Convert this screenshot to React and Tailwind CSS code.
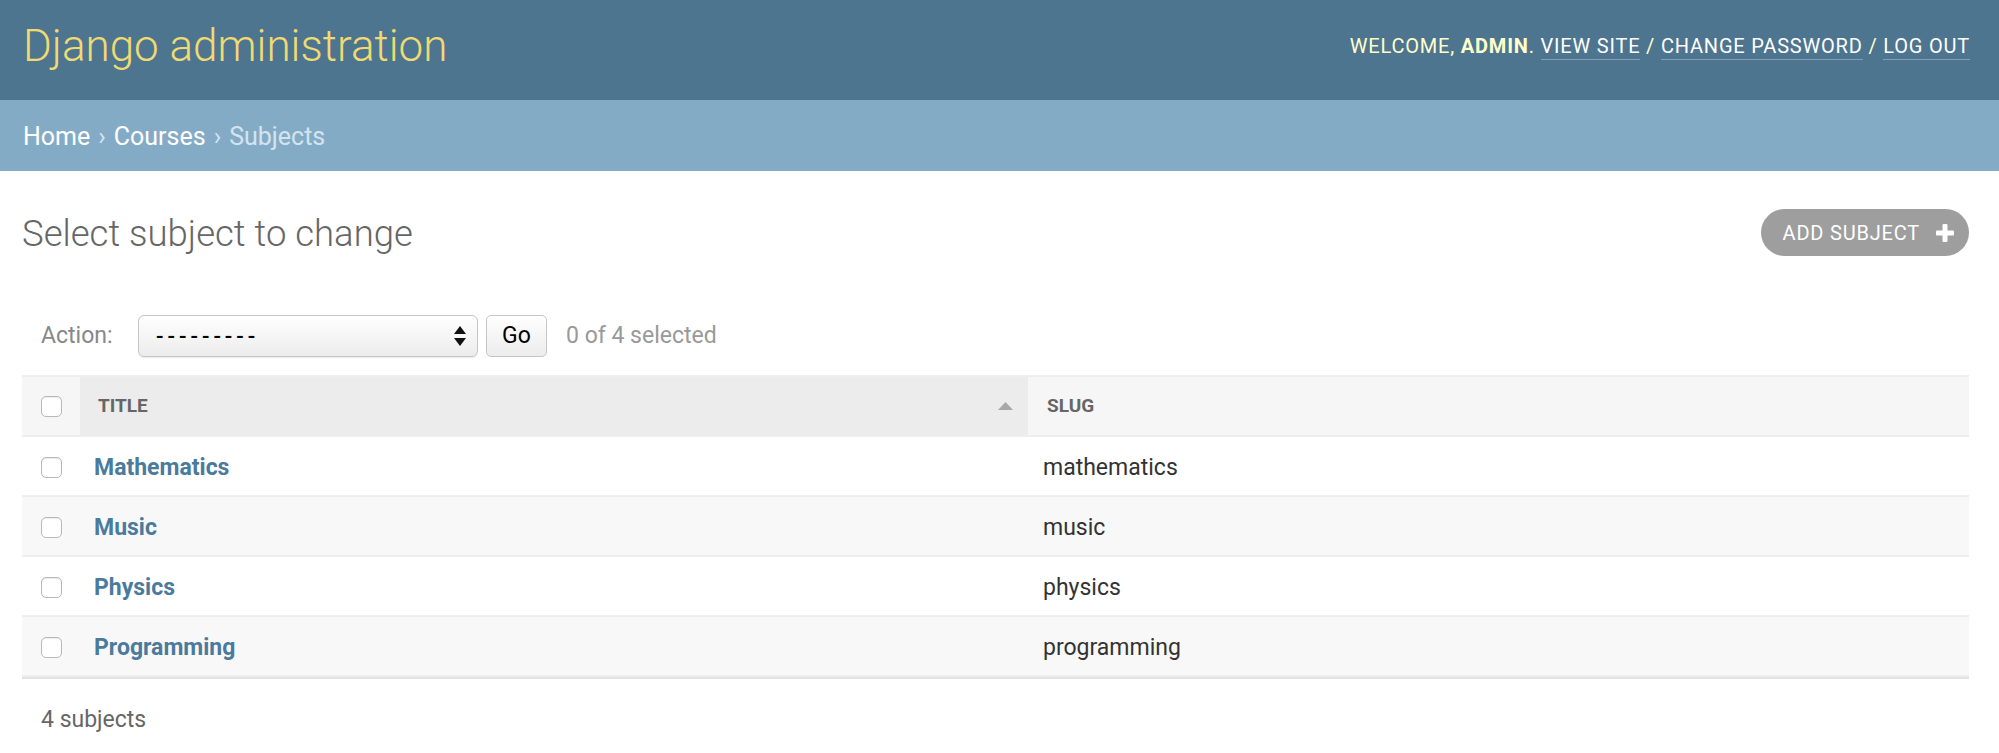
import { useState } from 'react';

const subjects = [
  { id: 1, title: 'Mathematics', slug: 'mathematics' },
  { id: 2, title: 'Music', slug: 'music' },
  { id: 3, title: 'Physics', slug: 'physics' },
  { id: 4, title: 'Programming', slug: 'programming' },
];

function Checkbox({ checked, onChange }) {
  return (
    <button
      type="button"
      onClick={onChange}
      className={`w-[21px] h-[21px] rounded-[5px] border border-[#b8b8b8] shadow-[inset_0_1px_1px_rgba(0,0,0,0.08)] ${
        checked ? 'bg-[#4a7b9d]' : 'bg-white'
      }`}
    ></button>
  );
}

function PlusIcon() {
  return (
    <svg width="18" height="18" viewBox="0 0 18 18">
      <rect x="6.5" y="0" width="5" height="18" rx="1" fill="#fff" />
      <rect x="0" y="6.5" width="18" height="5" rx="1" fill="#fff" />
    </svg>
  );
}

export default function App() {
  const [selected, setSelected] = useState([]);

  const toggle = (id) => {
    setSelected(selected.includes(id) ? selected.filter((s) => s !== id) : [...selected, id]);
  };

  const toggleAll = () => {
    setSelected(selected.length === subjects.length ? [] : subjects.map((s) => s.id));
  };

  return (
    <div className="min-h-[753px] bg-white font-['Roboto','Liberation_Sans',sans-serif] text-[#333]">
      {/* header */}
      <div className="h-[100px] bg-[#4e758f] flex items-center justify-between pl-[23px] pr-[29px] pb-[8px]">
        <h1 className="text-[44px] font-light text-[#f0da72] leading-none">Django administration</h1>
        <div className="text-[20px] tracking-[0.8px] uppercase text-[#ffffcc]">
          Welcome, <strong className="font-bold">admin</strong>.{' '}
          <a className="text-white border-b border-white/30 pb-[1px]">View site</a> /{' '}
          <a className="text-white border-b border-white/30 pb-[1px]">Change password</a> /{' '}
          <a className="text-white border-b border-white/30 pb-[1px]">Log out</a>
        </div>
      </div>

      {/* breadcrumbs */}
      <div className="h-[71px] bg-[#84abc6] flex items-center pl-[23px] pt-[3px] text-[25px] text-[#d4e4ee]">
        <a className="text-white">Home</a>
        <span className="mx-[8px]">›</span>
        <a className="text-white">Courses</a>
        <span className="mx-[8px]">›</span>
        <span>Subjects</span>
      </div>

      <div className="pl-[22px] pr-[30px]">
        {/* title row */}
        <div className="flex items-center justify-between mt-[38px]">
          <h2 className="text-[36.5px] font-light text-[#666] leading-none pt-[4px]">Select subject to change</h2>
          <a className="h-[47px] flex items-center gap-[16px] pl-[22px] pr-[15px] rounded-full bg-[#9e9e9e] text-white text-[20px] tracking-[0.8px] uppercase">
            Add subject
            <PlusIcon />
          </a>
        </div>

        {/* actions */}
        <div className="flex items-center mt-[59px] pl-[19px] text-[23px]">
          <label className="text-[#888] w-[97px]">Action:</label>
          <div className="w-[340px] h-[42px] flex items-center justify-between pl-[17px] pr-[11px] rounded-[6px] border border-[#c6c6c6] bg-gradient-to-b from-white to-[#ececec] shadow-[0_1px_1px_rgba(0,0,0,0.08)]">
            <span className="text-black text-[22px] font-medium tracking-[4px]">---------</span>
            <svg width="12" height="20" viewBox="0 0 12 20">
              <path d="M6 0 L12 8 L0 8 Z" fill="#111" />
              <path d="M0 12 L12 12 L6 20 Z" fill="#111" />
            </svg>
          </div>
          <button className="ml-[8px] w-[61px] h-[42px] rounded-[5px] border border-[#c6c6c6] bg-gradient-to-b from-white to-[#ececec] text-black text-[23px]">
            Go
          </button>
          <span className="ml-[19px] text-[#999]">
            {selected.length} of {subjects.length} selected
          </span>
        </div>

        {/* results table */}
        <table className="w-full mt-[18px] border-collapse">
          <thead>
            <tr className="h-[60px] text-[19px] font-bold uppercase text-[#666] text-left">
              <th className="w-[58px] bg-[#f6f6f6] border-y-2 border-[#eee]">
                <div className="flex justify-center">
                  <Checkbox checked={selected.length === subjects.length} onChange={toggleAll} />
                </div>
              </th>
              <th className="w-[948px] bg-[#ececec] border-y-2 border-[#eee] pl-[18px] pr-[15px]">
                <div className="flex items-center justify-between">
                  <span>Title</span>
                  <svg width="15" height="8" viewBox="0 0 15 8">
                    <path d="M7.5 0 L15 8 L0 8 Z" fill="#a8a8a8" />
                  </svg>
                </div>
              </th>
              <th className="bg-[#f6f6f6] border-y-2 border-[#eee] pl-[19px]">Slug</th>
            </tr>
          </thead>
          <tbody>
            {subjects.map((s, i) => (
              <tr
                key={s.id}
                className={`h-[60px] text-[23px] border-b-2 border-[#eee] ${i % 2 === 1 ? 'bg-[#f8f8f8]' : 'bg-white'}`}
              >
                <td className="pt-[2px]">
                  <div className="flex justify-center">
                    <Checkbox checked={selected.includes(s.id)} onChange={() => toggle(s.id)} />
                  </div>
                </td>
                <td className="pl-[14px] pt-[4px]">
                  <a className="font-bold text-[#4a7b9d]">{s.title}</a>
                </td>
                <td className="pl-[15px] pt-[4px]">{s.slug}</td>
              </tr>
            ))}
          </tbody>
        </table>

        {/* paginator */}
        <div className="border-t-2 border-[#e2e2e2] pt-[24px] pl-[19px] text-[23px] text-[#666]">
          {subjects.length} subjects
        </div>
      </div>
    </div>
  );
}
